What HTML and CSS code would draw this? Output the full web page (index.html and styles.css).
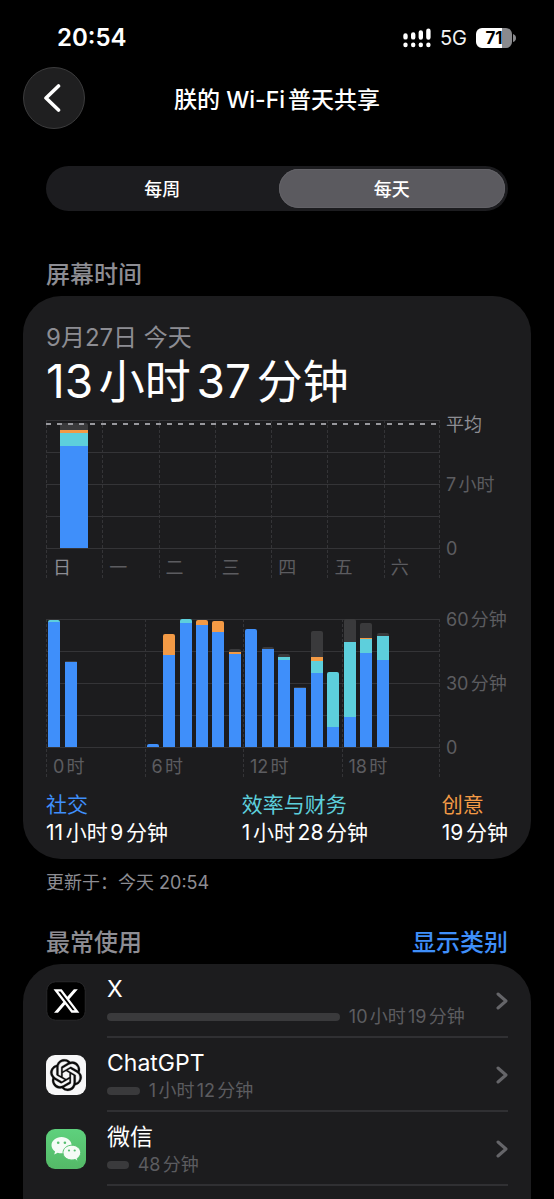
FILE: index.html
```html
<!DOCTYPE html>
<html lang="zh-CN">
<head>
<meta charset="utf-8">
<meta name="viewport" content="width=device-width, initial-scale=1">
<title>屏幕时间</title>
<link rel="stylesheet" href="styles.css">
</head>
<body>
<div class="status">
  <span class="clock">20:54</span>
  <div class="status-right">
    <svg class="signal" viewBox="0 0 28 20" aria-hidden="true">
      <g stroke="#fff" stroke-width="4.4" stroke-linecap="round">
        <path d="M2.5 7.400v2M10.200 6.400v3M17.800 4.500v5M25.400 2.800v6.700"/>
        <path d="M2.500 16.700v.3M10.200 16.700v.3M17.800 16.700v.3M25.400 16.700v.3"/>
      </g>
    </svg>
    <span class="network">5G</span>
    <div class="battery"><span class="battery-level">71</span><svg class="battery-tip" viewBox="0 0 3 8" aria-hidden="true"><path d="M0 0Q3 1 3 4T0 8Z" fill="#8a8a8d"/></svg></div>
  </div>
</div>

<header class="nav">
  <button class="back" type="button" aria-label="返回">
    <svg viewBox="0 0 18 28" aria-hidden="true"><path d="M15.500 2L3 14l12.500 12" fill="none" stroke="#fff" stroke-width="3.600" stroke-linecap="round" stroke-linejoin="round"/></svg>
  </button>
  <h1 class="title">朕的 Wi-Fi普天共享</h1>
</header>

<div class="segments" role="radiogroup">
  <label class="segment"><input type="radio" name="range"><span>每周</span></label>
  <label class="segment"><input type="radio" name="range" checked><span>每天</span></label>
</div>

<div class="section-head"><h2>屏幕时间</h2></div>
<section class="card summary">
  <p class="date">9月27日 今天</p>
  <p class="total">13小时37分钟</p>

  <div class="chart">
    <div class="plot week">
      <div class="average"></div>
      <div class="group"><div class="bars"><div class="bar"><i class="social" style="--v:11.15"></i><i class="work" style="--v:1.47"></i><i class="create" style="--v:.32"></i><i class="other" style="--v:.7"></i></div></div><span class="tick current">日</span></div>
      <div class="group"><div class="bars"></div><span class="tick">一</span></div>
      <div class="group"><div class="bars"></div><span class="tick">二</span></div>
      <div class="group"><div class="bars"></div><span class="tick">三</span></div>
      <div class="group"><div class="bars"></div><span class="tick">四</span></div>
      <div class="group"><div class="bars"></div><span class="tick">五</span></div>
      <div class="group"><div class="bars"></div><span class="tick">六</span></div>
    </div>
    <div class="axis week-axis"><span class="average-label">平均</span><span>7小时</span><span>0</span></div>
  </div>

  <div class="chart hours-chart">
    <div class="plot hours">
      <div class="group">
        <div class="bars">
          <div class="bar"><i class="social" style="--v:58.500"></i><i class="work" style="--v:1"></i></div>
          <div class="bar"><i class="social" style="--v:40"></i><i class="other" style="--v:.5"></i></div>
          <div class="bar"></div><div class="bar"></div><div class="bar"></div><div class="bar"></div>
        </div>
        <span class="tick">0时</span>
      </div>
      <div class="group">
        <div class="bars">
          <div class="bar"><i class="social" style="--v:1.200"></i></div>
          <div class="bar"><i class="social" style="--v:43"></i><i class="create" style="--v:10"></i></div>
          <div class="bar"><i class="social" style="--v:58"></i><i class="work" style="--v:2"></i></div>
          <div class="bar"><i class="social" style="--v:57"></i><i class="create" style="--v:2.500"></i></div>
          <div class="bar"><i class="social" style="--v:54"></i><i class="create" style="--v:5"></i></div>
          <div class="bar"><i class="social" style="--v:43.500"></i><i class="create" style="--v:1"></i><i class="other" style="--v:1.500"></i></div>
        </div>
        <span class="tick">6时</span>
      </div>
      <div class="group">
        <div class="bars">
          <div class="bar"><i class="social" style="--v:55.200"></i></div>
          <div class="bar"><i class="social" style="--v:45.800"></i><i class="other" style="--v:1"></i></div>
          <div class="bar"><i class="social" style="--v:40.600"></i><i class="work" style="--v:1.500"></i><i class="other" style="--v:1.500"></i></div>
          <div class="bar"><i class="social" style="--v:27.600"></i><i class="other" style="--v:.6"></i></div>
          <div class="bar"><i class="social" style="--v:34.700"></i><i class="work" style="--v:5.600"></i><i class="create" style="--v:2"></i><i class="other" style="--v:12.200"></i></div>
          <div class="bar"><i class="social" style="--v:9.200"></i><i class="work" style="--v:26"></i></div>
        </div>
        <span class="tick">12时</span>
      </div>
      <div class="group">
        <div class="bars">
          <div class="bar"><i class="social" style="--v:14"></i><i class="work" style="--v:35"></i><i class="other" style="--v:11"></i></div>
          <div class="bar"><i class="social" style="--v:44"></i><i class="work" style="--v:6.700"></i><i class="create" style="--v:.4"></i><i class="other" style="--v:7"></i></div>
          <div class="bar"><i class="social" style="--v:41"></i><i class="work" style="--v:11"></i><i class="other" style="--v:1.500"></i></div>
          <div class="bar"></div><div class="bar"></div><div class="bar"></div>
        </div>
        <span class="tick">18时</span>
      </div>
    </div>
    <div class="axis"><span>60分钟</span><span>30分钟</span><span>0</span></div>
  </div>

  <dl class="legend">
    <div><dt class="social-text">社交</dt><dd>11小时9分钟</dd></div>
    <div><dt class="work-text">效率与财务</dt><dd>1小时28分钟</dd></div>
    <div><dt class="create-text">创意</dt><dd>19分钟</dd></div>
  </dl>
</section>
<p class="updated">更新于：今天 20:54</p>

<div class="section-head apps-head"><h2>最常使用</h2><button class="link" type="button">显示类别</button></div>
<ul class="card apps">
  <li>
    <a class="app" href="#x">
      <svg class="app-icon" viewBox="0 0 40 40" aria-hidden="true">
        <rect x=".75" y=".75" width="38.500" height="38.500" rx="9" fill="#000" stroke="#29292b"/>
        <path transform="translate(6 5.600) scale(1.200)" d="M18.244 2.25h3.308l-7.227 8.26 8.502 11.24H16.17l-5.214-6.817L4.99 21.75H1.68l7.73-8.835L1.254 2.25H8.08l4.713 6.231zm-1.161 17.52h1.833L7.084 4.126H5.117z" fill="#fff"/>
      </svg>
      <div class="app-body">
        <div class="app-main"><span class="app-name">X</span><div class="usage"><i style="width:64.500%"></i><span>10小时19分钟</span></div></div>
        <svg class="chevron" viewBox="0 0 12 18" aria-hidden="true"><path d="M2 2l8 7-8 7"/></svg>
      </div>
    </a>
  </li>
  <li>
    <a class="app" href="#chatgpt">
      <svg class="app-icon" viewBox="0 0 40 40" aria-hidden="true">
        <rect width="40" height="40" rx="9" fill="#f7f7f8"/>
        <path transform="translate(4.200 4.200) scale(1.320)" d="M22.2819 9.8211a5.9847 5.9847 0 0 0-.5157-4.9108 6.0462 6.0462 0 0 0-6.5098-2.9A6.0651 6.0651 0 0 0 4.9807 4.1818a5.9847 5.9847 0 0 0-3.9977 2.9 6.0462 6.0462 0 0 0 .7427 7.0966 5.98 5.98 0 0 0 .511 4.9107 6.051 6.051 0 0 0 6.5146 2.9001A5.9847 5.9847 0 0 0 13.2599 24a6.0557 6.0557 0 0 0 5.7718-4.2058 5.9894 5.9894 0 0 0 3.9977-2.9001 6.0557 6.0557 0 0 0-.7475-7.0729zm-9.022 12.6081a4.4755 4.4755 0 0 1-2.8764-1.0408l.1419-.0804 4.7783-2.7582a.7948.7948 0 0 0 .3927-.6813v-6.7369l2.02 1.1686a.071.071 0 0 1 .038.052v5.5826a4.504 4.504 0 0 1-4.4945 4.4944zm-9.6607-4.1254a4.4708 4.4708 0 0 1-.5346-3.0137l.142.0852 4.783 2.7582a.7712.7712 0 0 0 .7806 0l5.8428-3.3685v2.3324a.0804.0804 0 0 1-.0332.0615L9.74 19.9502a4.4992 4.4992 0 0 1-6.1408-1.6464zM2.3408 7.8956a4.485 4.485 0 0 1 2.3655-1.9728V11.6a.7664.7664 0 0 0 .3879.6765l5.8144 3.3543-2.0201 1.1685a.0757.0757 0 0 1-.071 0l-4.8303-2.7865A4.504 4.504 0 0 1 2.3408 7.872zm16.5963 3.8558L13.1038 8.364 15.1192 7.2a.0757.0757 0 0 1 .071 0l4.8303 2.7913a4.4944 4.4944 0 0 1-.6765 8.1042v-5.6772a.79.79 0 0 0-.407-.667zm2.0107-3.0231l-.142-.0852-4.7735-2.7818a.7759.7759 0 0 0-.7854 0L9.409 9.2297V6.8974a.0662.0662 0 0 1 .0284-.0615l4.8303-2.7866a4.4992 4.4992 0 0 1 6.6802 4.66zM8.3065 12.863l-2.02-1.1638a.0804.0804 0 0 1-.038-.0567V6.0742a4.4992 4.4992 0 0 1 7.3757-3.4537l-.142.0805L8.704 5.459a.7948.7948 0 0 0-.3927.6813zm1.0976-2.3654l2.602-1.4998 2.6069 1.4998v2.9994l-2.5974 1.4997-2.6067-1.4997Z" fill="#0b0b0b" stroke="#0b0b0b" stroke-width=".2"/>
      </svg>
      <div class="app-body">
        <div class="app-main"><span class="app-name">ChatGPT</span><div class="usage"><i style="width:9.100%"></i><span>1小时12分钟</span></div></div>
        <svg class="chevron" viewBox="0 0 12 18" aria-hidden="true"><path d="M2 2l8 7-8 7"/></svg>
      </div>
    </a>
  </li>
  <li>
    <a class="app" href="#wechat">
      <svg class="app-icon" viewBox="0 0 40 40" aria-hidden="true">
        <defs><linearGradient id="wechat" x2="0" y2="1"><stop stop-color="#5ed17d"/><stop offset="1" stop-color="#54b967"/></linearGradient></defs>
        <rect width="40" height="40" rx="9" fill="url(#wechat)"/>
        <path d="M15.500 8C9.900 8 5.500 11.700 5.500 16.200c0 2.600 1.400 4.800 3.600 6.300l-.9 3.100 3.500-1.900c1.200.4 2.500.6 3.800.6 5.700 0 10.100-3.600 10.100-8.100S21.200 8 15.500 8Z" fill="#f5fbf6"/>
        <path d="M25.900 16.200c-5 0-8.900 3.300-8.900 7.400s3.900 7.400 8.900 7.400c1.100 0 2.100-.2 3.100-.5l3 1.700-.8-2.700c2.200-1.400 3.500-3.500 3.500-5.900 0-4.100-3.900-7.400-8.800-7.400Z" fill="#f5fbf6" stroke="#5ac473"/>
        <g fill="#58bf70"><circle cx="12.200" cy="13.800" r="1.300"/><circle cx="18.900" cy="13.800" r="1.300"/><circle cx="23" cy="21.500" r="1.100"/><circle cx="28.700" cy="21.500" r="1.100"/></g>
      </svg>
      <div class="app-body">
        <div class="app-main"><span class="app-name">微信</span><div class="usage"><i style="width:6%"></i><span>48分钟</span></div></div>
        <svg class="chevron" viewBox="0 0 12 18" aria-hidden="true"><path d="M2 2l8 7-8 7"/></svg>
      </div>
    </a>
  </li>
</ul>
</body>
</html>
```
FILE: styles.css
```css
:root {
  --blue: #3f8ffa;
  --teal: #5dcfdc;
  --orange: #f39a45;
  --card: #1c1c1e;
  --gray: #8d8d93;
  --dim: #5c5c60;
  --line: #343437;
}

* { box-sizing: border-box; }

body {
  margin: 0;
  min-height: 100vh;
  display: flex;
  flex-direction: column;
  padding: 0 23px;
  background: #000;
  color: #fff;
  font-family: Inter, "Noto Sans CJK SC", sans-serif;
  text-autospace: normal;
}

h1, h2, p, dl, dd, ul { margin: 0; padding: 0; }
button { border: 0; padding: 0; background: none; font: inherit; cursor: pointer; }

.status {
  display: flex;
  justify-content: space-between;
  align-items: center;
  height: 67px;
  padding: 8px 15px 0 34px;
}
.clock { font-size: 24px; line-height: 28px; font-weight: 600; }
.status-right { display: flex; align-items: center; gap: 9px; }
.signal { width: 28px; height: 20px; }
.network { font-size: 20px; line-height: 24px; color: #f2f2f2; }
.battery { display: flex; align-items: center; gap: 1px; }
.battery-level {
  width: 36px;
  height: 20px;
  border-radius: 6px;
  background: linear-gradient(to right, #fff 71%, #8a8a8d 71%);
  color: #000;
  font-size: 17px;
  line-height: 20px;
  font-weight: 700;
  text-align: center;
}
.battery-tip { width: 3px; height: 8px; }

.nav {
  display: grid;
  grid-template-columns: 62px 1fr 62px;
  align-items: center;
}
.back {
  display: grid;
  place-items: center;
  width: 62px;
  height: 62px;
  border: 1px solid #3c3c3d;
  border-radius: 50%;
  background: #1f1f20;
}
.back svg { width: 18px; height: 28px; margin-right: 4px; }
.title { padding-top: 3px; font-size: 23px; line-height: 32px; font-weight: 500; text-align: center; white-space: nowrap; }

.segments {
  display: grid;
  grid-template-columns: 1fr 1fr;
  gap: 3px;
  margin: 37px 23px 0;
  padding: 3px;
  border-radius: 23px;
  background: #1c1c1f;
}
.segment { position: relative; cursor: pointer; }
.segment input { position: absolute; opacity: 0; }
.segment span {
  display: block;
  padding-top: 2px;
  border-radius: 20px;
  font-size: 18px;
  line-height: 37px;
  font-weight: 500;
  text-align: center;
}
.segment input:checked + span { background: #5b5a5f; box-shadow: inset 0 0 0 1px #626166; }

.section-head {
  display: flex;
  justify-content: space-between;
  margin: 48px 23px 5px;
  font-size: 24px;
  line-height: 32px;
}
.section-head h2 { font-size: inherit; font-weight: 500; color: var(--gray); }
.apps-head { margin-top: 32px; }
.link { color: var(--blue); font-weight: 500; }

.card { border-radius: 38px; background: var(--card); }
.summary { padding: 27px 23px 12px; }
.date { font-size: 24px; line-height: 30px; color: var(--gray); text-autospace: no-autospace; }
.total { font-size: 46px; line-height: 56px; }

.chart { display: grid; grid-template-columns: 1fr 68px; margin-top: 11px; }
.hours-chart { margin-top: 41px; }
.plot {
  position: relative;
  display: grid;
  grid-auto-flow: column;
  grid-auto-columns: 1fr;
  background: repeating-linear-gradient(to bottom, var(--line) 0 3px, transparent 3px 5px) right / 1px 100% no-repeat;
}
.group { background: repeating-linear-gradient(to bottom, var(--line) 0 3px, transparent 3px 5px) left / 1px 100% no-repeat; }
.bars {
  display: grid;
  grid-auto-flow: column;
  grid-auto-columns: 1fr;
  height: 129px;
  background: linear-gradient(var(--line) 1px, transparent 1px) top / 100% 32px;
}
.bar {
  --max: 60;
  display: flex;
  flex-direction: column-reverse;
  width: 12px;
  height: 128px;
  margin: 0 auto;
  overflow: hidden;
}
.week .bar { --max: 14; width: 50%; }
.bar i { flex: none; height: calc(var(--v) * 100% / var(--max)); }
.bar i:last-child { border-radius: 2px 2px 0 0; }
.social { background: var(--blue); }
.work { background: var(--teal); }
.create { background: var(--orange); }
.other { background: #3a3a3c; }
.average {
  position: absolute;
  inset: 3px 0 auto;
  height: 2px;
  background: repeating-linear-gradient(to right, #98989d 0 5px, transparent 5px 11px);
}
.tick { display: block; padding: 9px 0 0 7px; font-size: 18px; line-height: 20px; color: var(--dim); }
.current { color: var(--gray); }
.axis {
  display: grid;
  grid-template-rows: 64px 64px 20px;
  align-content: start;
  margin-top: -9px;
  padding-left: 6px;
  font-size: 18px;
  line-height: 20px;
  color: var(--dim);
  white-space: nowrap;
}
.week-axis { grid-template-rows: 60px 64px 20px; margin-top: -5px; }
.average-label { color: var(--gray); }

.legend { display: flex; justify-content: space-between; margin-top: 14px; font-size: 21px; line-height: 28px; }
.social-text { color: var(--blue); }
.work-text { color: var(--teal); }
.create-text { color: var(--orange); }

.updated { margin: 12px 23px 0; font-size: 18px; line-height: 24px; color: var(--gray); }

.apps { flex: 1; padding: 0 23px; border-radius: 38px 38px 0 0; list-style: none; }
.app { display: grid; grid-template-columns: 40px 1fr; gap: 21px; align-items: center; color: inherit; text-decoration: none; }
.app-icon { width: 40px; height: 40px; }
.app-body {
  display: flex;
  align-items: center;
  gap: 28px;
  height: 74px;
  padding-top: 2px;
  border-bottom: 2px solid #303033;
}
.app-main { flex: 1; }
.app-name { display: block; font-size: 23px; line-height: 32px; }
.usage { display: flex; align-items: center; gap: 9px; font-size: 18px; line-height: 24px; color: var(--dim); white-space: nowrap; }
.usage i { flex: none; height: 8px; border-radius: 4px; background: #3a3a3c; }
.chevron { width: 12px; height: 18px; fill: none; stroke: #656569; stroke-width: 3; stroke-linecap: round; stroke-linejoin: round; }
```
